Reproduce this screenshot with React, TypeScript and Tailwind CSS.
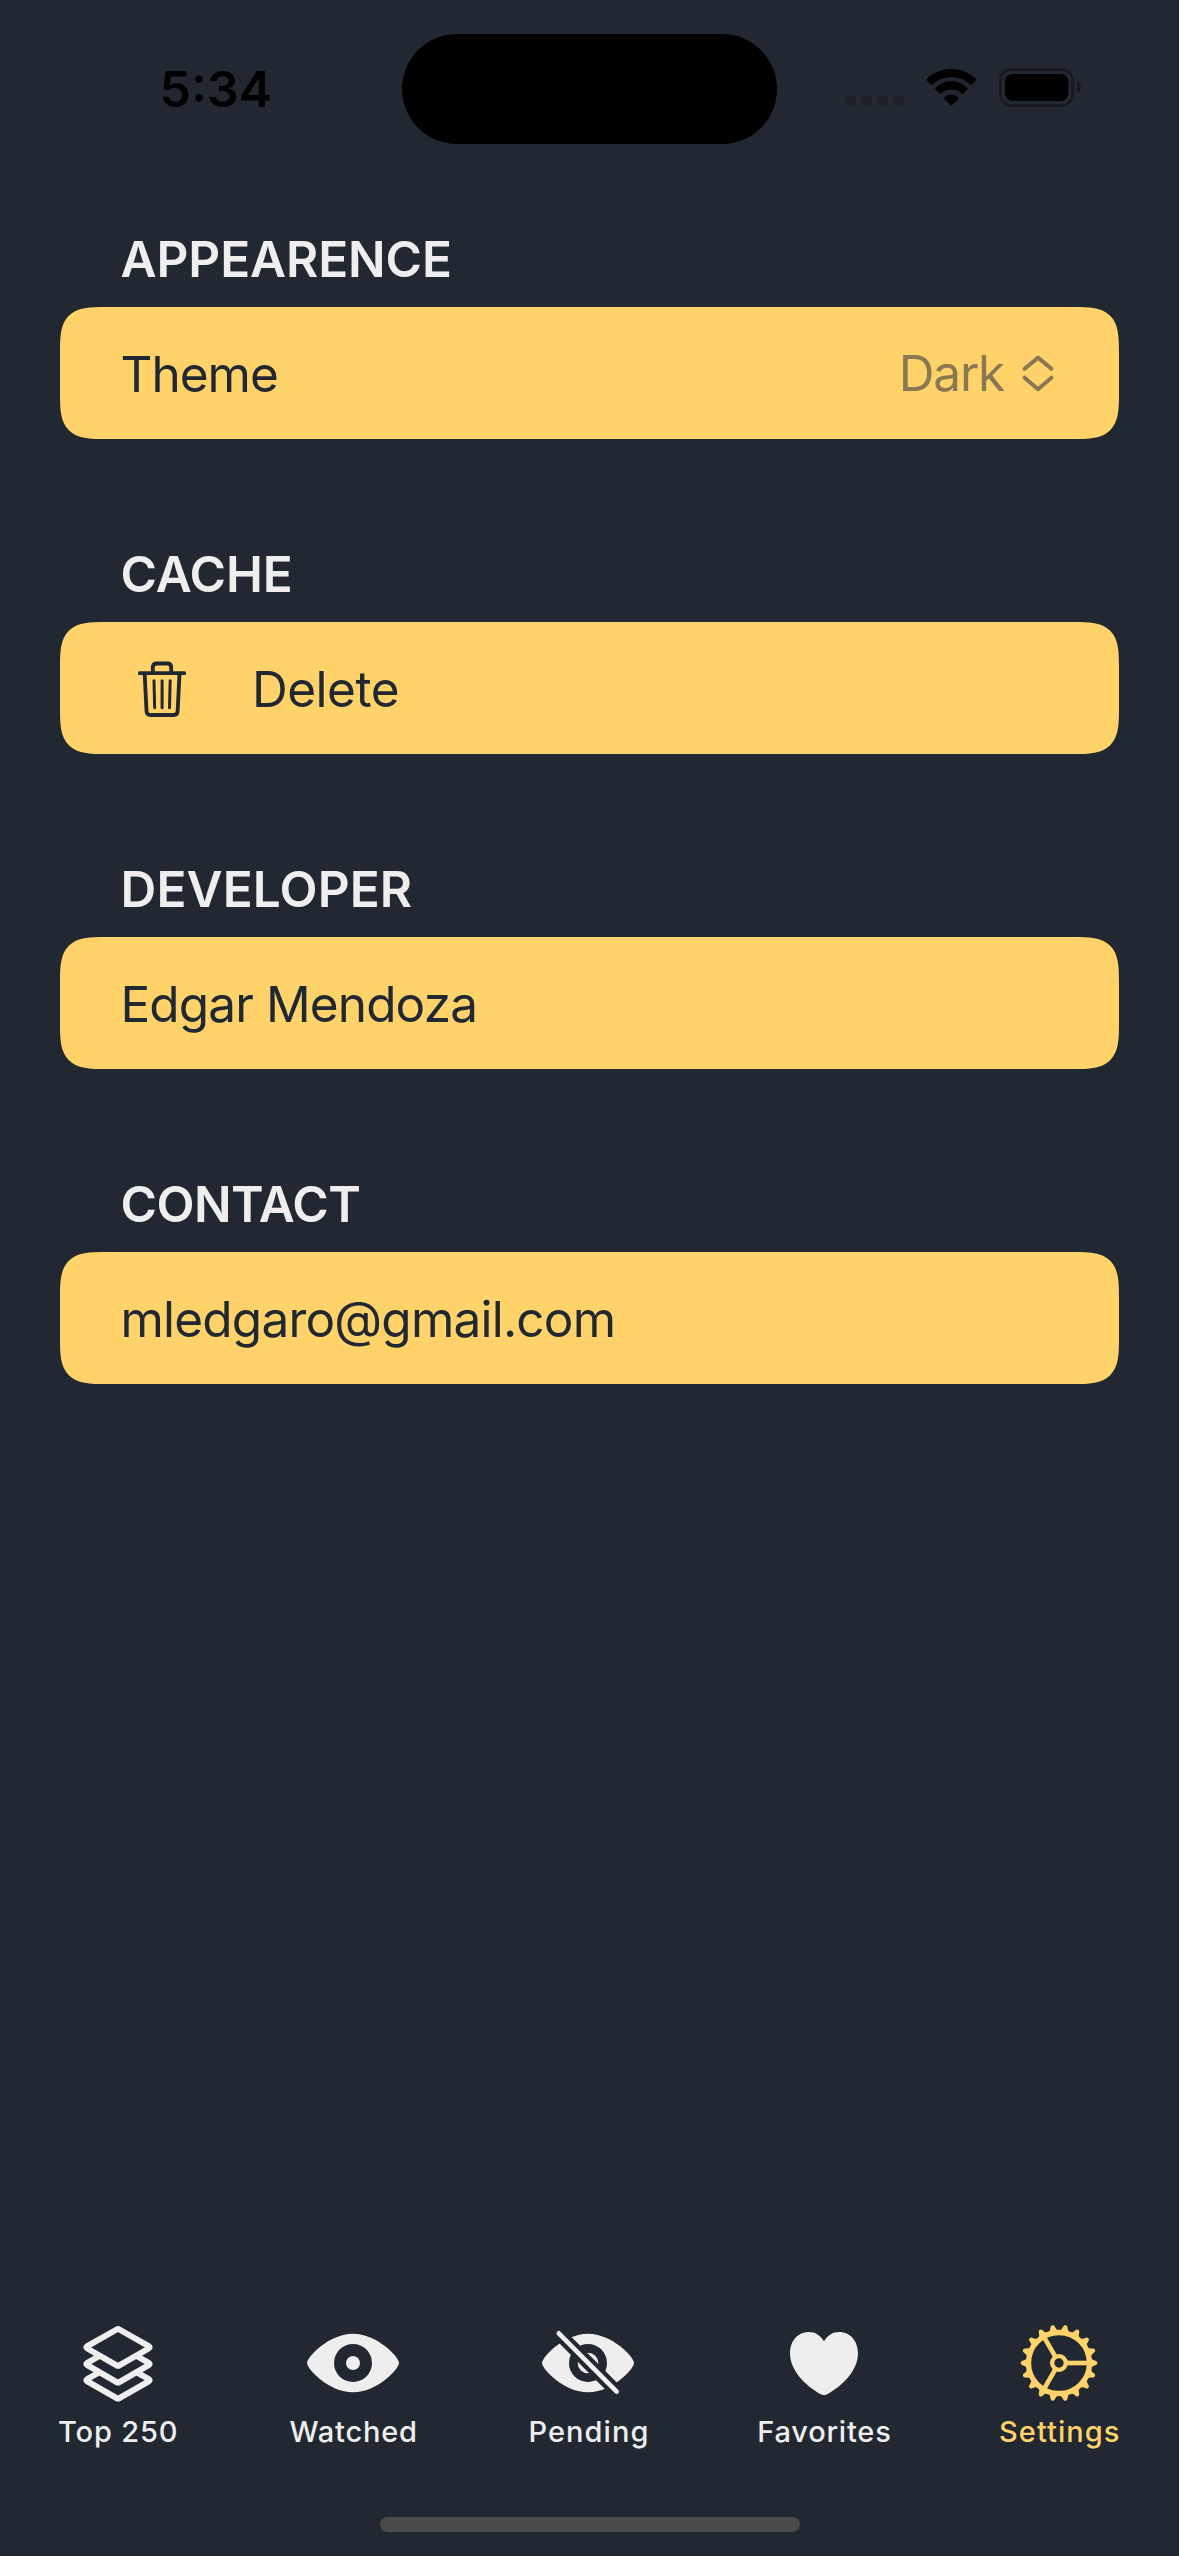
import type { ReactNode } from "react";

function CellularDots() {
  return (
    <svg className="h-[10px] w-[58px]" viewBox="0 0 174 30" fill="#000" fillOpacity={0.2}>
      {[0, 48, 96, 144].map((x) => (
        <rect key={x} x={x} y={0} width={30} height={30} rx={9} />
      ))}
    </svg>
  );
}

function WifiIcon() {
  return (
    <svg className="h-[37px] w-[51px]" viewBox="318 57 153 111" fill="#000">
      <path d="M320 91 Q318 89 320 87 A105 105 0 0 1 468 87 Q470 89 468 91 L455 104 Q454 105 452 104 A86 86 0 0 0 336 104 Q334 105 333 104 Z" />
      <path d="M346 118 Q344 116 346 114 A66 66 0 0 1 442 114 Q444 116 442 118 L429 131 Q428 132 426 131 A48 48 0 0 0 362 131 Q360 132 359 131 Z" />
      <path d="M373 146 Q371 144 373 142 A31 31 0 0 1 415 142 Q417 144 415 146 L396 166 Q394 168 392 166 Z" />
    </svg>
  );
}

function BatteryIcon() {
  return (
    <svg className="h-[39px] w-[82px]" viewBox="537 54 246 117">
      <g fill="none" stroke="#000" strokeOpacity={0.35}>
        <rect x={541} y={58} width={217} height={109} rx={34} strokeWidth={8} />
      </g>
      <path d="M771 95 C779 98 783 105 783 112.5 C783 120 779 127 771 130 Z" fill="#000" fillOpacity={0.4} />
      <rect x={555} y={72} width={190} height={81} rx={23} fill="#000" />
    </svg>
  );
}

function ChevronsUpDown() {
  return (
    <svg
      className="h-[37px] w-[32px]"
      viewBox="0 0 32 37"
      fill="none"
      stroke="currentColor"
      strokeWidth={4}
      strokeLinecap="round"
      strokeLinejoin="round"
    >
      <path d="M2.6 13.7 L16 2.6 L29.4 13.7" />
      <path d="M2.6 22.7 L16 34.2 L29.4 22.7" />
    </svg>
  );
}

function TrashIcon() {
  return (
    <svg
      className="h-[56px] w-[48px]"
      viewBox="54 60 144 168"
      fill="none"
      stroke="currentColor"
      strokeLinecap="round"
      strokeLinejoin="round"
    >
      <g strokeWidth={11.5}>
        <path d="M98.500 94 V79 Q98.500 67.500 110 67.500 H142 Q153.500 67.500 153.500 79 V94" />
        <path d="M59.500 96.500 H192.500" />
        <path d="M74 98 L79.500 210 Q80 222 91.500 222 H161 Q172.500 222 173 210 L178.500 98" />
      </g>
      <g strokeWidth={9}>
        <path d="M102 119 L104 200" />
        <path d="M126.300 119 V200" />
        <path d="M150.500 119 L148.500 200" />
      </g>
    </svg>
  );
}

function StackIcon() {
  return (
    <svg
      className="h-[80px] w-[100px]"
      viewBox="83 69 300 240"
      fill="none"
      stroke="currentColor"
      strokeWidth={18}
      strokeLinejoin="round"
    >
      <path d="M237 88.500 L325 138.500 Q331 142 325 145.500 L237 196 Q233 198.500 229 196 L141 145.500 Q135 142 141 138.500 L229 88.500 Q233 86 237 88.500 Z" />
      <path d="M177 168 L141 188.500 Q135 192 141 195.500 L229 246.500 Q233 249 237 246.500 L325 195.500 Q331 192 325 188.500 L289 168" />
      <path d="M177 217 L141 237 Q135 240.500 141 244 L229 294.500 Q233 297 237 294.500 L325 244 Q331 240.500 325 237 L289 217" />
    </svg>
  );
}

function EyeShape() {
  return (
    <path
      d="M-138 0 C-138 -19 -71 -88 0 -88 C71 -88 138 -19 138 0 C138 19 71 88 0 88 C-71 88 -138 19 -138 0 Z"
      fill="currentColor"
    />
  );
}

function EyeIcon() {
  return (
    <svg className="h-[80px] w-[100px]" viewBox="-150 -120 300 240">
      <EyeShape />
      <circle r={57} fill="#222831" />
      <circle r={21} fill="currentColor" />
    </svg>
  );
}

function EyeOffIcon() {
  return (
    <svg className="h-[80px] w-[100px]" viewBox="-150 -120 300 240" strokeLinecap="round">
      <EyeShape />
      <circle r={57} fill="#222831" />
      <circle r={31} fill="currentColor" />
      <path d="M-88 -89 L86 86" stroke="#222831" strokeWidth={39} />
      <path d="M-87.500 -89 L86 86" stroke="currentColor" strokeWidth={14} />
    </svg>
  );
}

function HeartIcon() {
  return (
    <svg className="h-[80px] w-[100px]" viewBox="822 69 300 240" fill="currentColor">
      <path d="M972 124 C961 106 946 96 926 96 C894 96 870 122 870 160 C870 210 914 256 962 283 Q972 288 982 283 C1030 256 1074 210 1074 160 C1074 122 1050 96 1018 96 C998 96 983 106 972 124 Z" />
    </svg>
  );
}

function GearIcon() {
  const teeth = Array.from({ length: 18 }, (_, i) => i * 20);
  return (
    <svg className="h-[80px] w-[100px]" viewBox="-150 -120 300 240" fill="none" stroke="currentColor">
      <circle r={91.5} strokeWidth={16} />
      {teeth.map((a) => (
        <path
          key={a}
          transform={`rotate(${a})`}
          d="M95 -14 Q101 -9 111 -6 Q115 -5 115 0 Q115 5 111 6 Q101 9 95 14 Z"
          fill="currentColor"
          stroke="none"
        />
      ))}
      {[0, 120, 240].map((a) => (
        <path key={a} transform={`rotate(${a})`} d="M22 0 H88" strokeWidth={14} />
      ))}
      <circle r={20.5} strokeWidth={13} />
    </svg>
  );
}

function Section({ title, titleClass, children }: { title: string; titleClass: string; children: ReactNode }) {
  return (
    <section>
      <h2 className={`mb-[18px] pl-[60.5px] text-[49.5px] leading-[60px] font-semibold text-[#eeeeee] ${titleClass}`}>
        {title}
      </h2>
      <div className="flex h-[132px] items-center rounded-[33px] bg-[#ffd369] pt-[2px] pr-[65px] pl-[60.5px] text-[49.5px] leading-[60px] text-[#222831] supports-[corner-shape:squircle]:rounded-[46px] supports-[corner-shape:squircle]:[corner-shape:superellipse(1.7)]">
        {children}
      </div>
    </section>
  );
}

const tabs = [
  { label: "Top 250", icon: <StackIcon />, style: "text-[#eeeeee] tracking-[0.84px]" },
  { label: "Watched", icon: <EyeIcon />, style: "text-[#eeeeee] tracking-[0.78px]" },
  { label: "Pending", icon: <EyeOffIcon />, style: "text-[#eeeeee] tracking-[1.05px]" },
  { label: "Favorites", icon: <HeartIcon />, style: "text-[#eeeeee] tracking-[0.8px]" },
  { label: "Settings", icon: <GearIcon />, style: "text-[#ffd369] tracking-[1.05px]" },
];

export default function App() {
  return (
    <div className="flex h-[2556px] w-[1179px] flex-col overflow-hidden bg-[#222831] font-['Inter',sans-serif]">
      <header className="flex h-[177px] items-center">
        <div className="w-[402px] pl-[159.5px] text-[50px] leading-[60px] font-semibold text-black">5:34</div>
        <div className="mt-px h-[110px] w-[375px] rounded-full bg-black" />
        <div className="flex flex-1 items-end justify-end gap-[22px] pr-[98px] pb-[2px]">
          <div className="mb-px">
            <CellularDots />
          </div>
          <div className="mb-px">
            <WifiIcon />
          </div>
          <BatteryIcon />
        </div>
      </header>

      <main className="flex flex-col gap-[105px] px-[60px] pt-[52px]">
        <Section title="APPEARENCE" titleClass="tracking-[-0.08px]">
          <span className="tracking-[-1px]">Theme</span>
          <div className="-mt-[2px] ml-auto flex items-center gap-[18px] text-[#8a7852]">
            <span className="tracking-[-1.24px]">Dark</span>
            <ChevronsUpDown />
          </div>
        </Section>
        <Section title="CACHE" titleClass="tracking-[-0.1px]">
          <div className="flex items-center gap-[66px] pl-[17.5px]">
            <TrashIcon />
            <span className="tracking-[-0.49px]">Delete</span>
          </div>
        </Section>
        <Section title="DEVELOPER" titleClass="tracking-[0.14px]">
          <span className="tracking-[-0.88px]">Edgar Mendoza</span>
        </Section>
        <Section title="CONTACT" titleClass="tracking-[-0.55px]">
          <span className="tracking-[-0.79px]">mledgaro@gmail.com</span>
        </Section>
      </main>

      <footer className="mt-auto pb-[24px]">
        <nav className="grid grid-cols-5 pr-[2px]">
          {tabs.map((tab) => (
            <div key={tab.label} className={`flex flex-col items-center gap-[10.5px] ${tab.style}`}>
              {tab.icon}
              <span className="pl-px text-[29px] leading-[36px] font-medium">{tab.label}</span>
            </div>
          ))}
        </nav>
        <div className="mx-auto mt-[67.5px] h-[15px] w-[420px] rounded-full bg-[#4b4b4b]" />
      </footer>
    </div>
  );
}
